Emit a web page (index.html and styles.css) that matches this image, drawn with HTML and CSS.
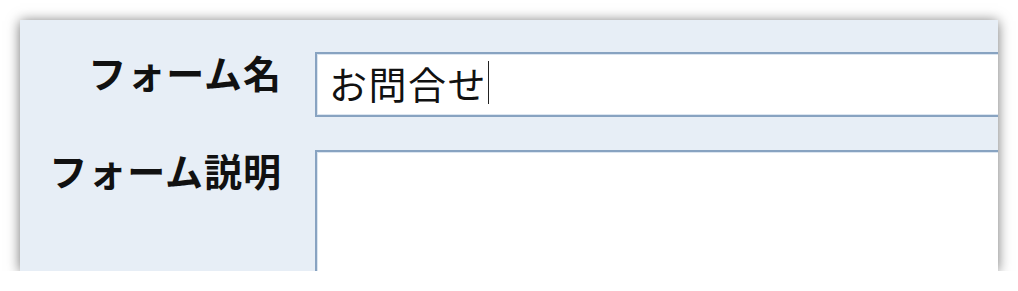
FILE: index.html
```html
<!DOCTYPE html>
<html lang="ja">
  <head>
    <meta charset="UTF-8" />
    <meta name="viewport" content="width=device-width, initial-scale=1.0" />
    <title>フォーム設定</title>
    <link rel="stylesheet" href="styles.css">
  </head>
  <body>
    <div class="panel">
      <div class="form-grid">
        <label class="label">フォーム名</label>
        <div class="field">お問合せ<span class="caret"></span></div>

        <label class="label">フォーム説明</label>
        <div class="field area"></div>
      </div>
    </div>
  </body>
</html>
```

FILE: styles.css
```css
body {
  margin: 0;
  padding: 0;
  background-color: #fff;
  font-family: "Noto Sans CJK JP", "Noto Sans", sans-serif;
}

.panel {
  margin: 20px 0 0 20px;
  width: 978px;
  height: 251px;
  background-color: #e7eef6;
  box-shadow: 0 1px 12px rgba(0, 0, 0, 0.55);
  overflow: hidden;
  box-sizing: border-box;
  padding-top: 32px;
}

.form-grid {
  display: grid;
  grid-template-columns: 262px 800px;
  column-gap: 33px;
  row-gap: 33px;
}

.label {
  font-size: 38px;
  font-weight: bold;
  letter-spacing: 1px;
  line-height: 40px;
  text-align: right;
  color: #111;
}

.field {
  height: 65px;
  box-sizing: border-box;
  background-color: #fff;
  border: 2px solid #88a3c1;
  box-shadow: inset 0 0 0 1px #dbe5f0;
  padding: 0 0 4px 12px;
  font-size: 38px;
  letter-spacing: 1.5px;
  line-height: 57px;
  color: #111;
  display: flex;
  align-items: center;
}

.caret {
  display: inline-block;
  width: 1px;
  height: 43px;
  background-color: #222;
  margin-left: 1px;
}

.area {
  height: 140px;
}
```
